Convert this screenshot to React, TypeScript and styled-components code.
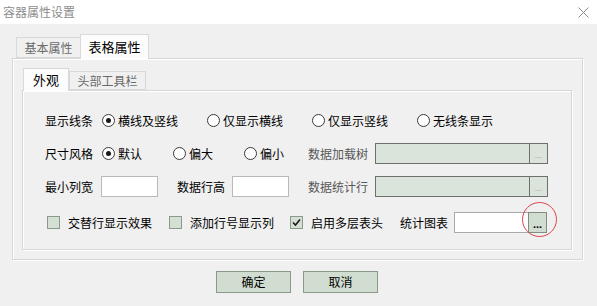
import React from "react";
import styled, { createGlobalStyle } from "styled-components";

const GlobalStyle = createGlobalStyle`
  html, body { margin: 0; padding: 0; background: #f0f0f0; }
  body {
    font-family: "Noto Sans CJK SC", "Liberation Sans", sans-serif;
    font-size: 12px;
    color: #000;
  }
  * { box-sizing: border-box; }
`;

const Window = styled.div`
  width: 597px;
  height: 306px;
  background: #f0f0f0;
  display: flex;
  flex-direction: column;
  overflow: hidden;
`;

const TitleBar = styled.div`
  height: 24px;
  background: #ffffff;
  display: flex;
  align-items: center;
  justify-content: space-between;
  padding: 0 8px 0 3px;
`;

const Title = styled.span`
  color: #8c8c8c;
  font-size: 12px;
  line-height: 14px;
`;

const Body = styled.div`
  padding: 10px 15px 0 12px;
  display: flex;
  flex-direction: column;
`;

const TabStrip = styled.div<{ $h: number; $pl: number }>`
  display: flex;
  align-items: flex-end;
  height: ${(p) => p.$h}px;
  padding-left: ${(p) => p.$pl}px;
  position: relative;
  z-index: 1;
`;

const Tab = styled.div<{ $w: number; $h: number; $active?: boolean; $noRight?: boolean }>`
  width: ${(p) => p.$w}px;
  height: ${(p) => p.$h + (p.$active ? 1 : 0)}px;
  margin-bottom: ${(p) => (p.$active ? -1 : 0)}px;
  border: 1px solid #d9d9d9;
  border-bottom: ${(p) => (p.$active ? "none" : "1px solid #d9d9d9")};
  border-right: ${(p) => (p.$noRight ? "none" : "1px solid #d9d9d9")};
  background: ${(p) => (p.$active ? "#fcfcfc" : "#f0f0f0")};
  color: ${(p) => (p.$active ? "#000" : "#6b6b6b")};
  font-size: ${(p) => (p.$active ? 13 : 12)}px;
  display: flex;
  align-items: center;
  justify-content: center;
  line-height: 14px;
  padding-top: ${(p) => (p.$active ? 0 : 1)}px;
`;

const Panel = styled.div<{ $w: number; $h: number; $p: string }>`
  width: ${(p) => p.$w}px;
  height: ${(p) => p.$h}px;
  border: 1px solid #d6d6d6;
  box-shadow: inset 1px 1px 0 #ffffff, 1px 1px 0 #ffffff;
  background: #f0f0f0;
  padding: ${(p) => p.$p};
  display: flex;
  flex-direction: column;
`;

const Row = styled.div<{ $mt: number }>`
  display: flex;
  align-items: center;
  height: 21px;
  margin-top: ${(p) => p.$mt}px;
`;

const Cell = styled.div<{ $w: number; $muted?: boolean }>`
  width: ${(p) => p.$w}px;
  flex: none;
  display: flex;
  align-items: center;
  white-space: nowrap;
  line-height: 14px;
  color: ${(p) => (p.$muted ? "#575757" : "#000")};
`;

const RadioCircle = styled.span<{ $on?: boolean }>`
  width: 13px;
  height: 13px;
  border-radius: 50%;
  border: 1px solid #3a3a3a;
  background: #ffffff;
  display: inline-flex;
  align-items: center;
  justify-content: center;
  margin-right: 3px;
  flex: none;
  &::after {
    content: "";
    display: ${(p) => (p.$on ? "block" : "none")};
    width: 5px;
    height: 5px;
    border-radius: 50%;
    background: #1a1a1a;
  }
`;

const CheckBox = styled.span`
  width: 13px;
  height: 13px;
  border: 1px solid #8a9a8a;
  background: #d5e0d5;
  display: inline-flex;
  align-items: center;
  justify-content: center;
  margin-right: 8px;
  flex: none;
`;

const TextInput = styled.div<{ $w: number }>`
  width: ${(p) => p.$w}px;
  height: 21px;
  background: #ffffff;
  border: 1px solid #b9b9b9;
  flex: none;
`;

const Combo = styled.div`
  display: flex;
  height: 21px;
  flex: none;
  position: relative;
`;

const ComboField = styled.div<{ $w: number; $disabled?: boolean }>`
  width: ${(p) => p.$w}px;
  height: 21px;
  background: ${(p) => (p.$disabled ? "#dae4da" : "#ffffff")};
  border: 1px solid ${(p) => (p.$disabled ? "#6f6f6f" : "#a9a9a9")};
  border-right: none;
`;

const DotsButton = styled.div<{ $dark?: boolean }>`
  width: 19px;
  height: 21px;
  background: ${(p) => (p.$dark ? "#d0ddd0" : "#dae4da")};
  border: 1px solid ${(p) => (p.$dark ? "#7f8f7f" : "#6f6f6f")};
  color: ${(p) => (p.$dark ? "#000" : "#a0a0a0")};
  font-size: ${(p) => (p.$dark ? 11 : 9)}px;
  font-weight: ${(p) => (p.$dark ? 700 : 400)};
  font-family: "Liberation Sans", sans-serif;
  display: flex;
  align-items: flex-end;
  justify-content: center;
  line-height: 12px;
  padding-bottom: 2px;
  position: relative;
`;

const RedCircle = styled.span`
  position: absolute;
  left: -7px;
  top: -11px;
  width: 35px;
  height: 35px;
  border: 1px solid #d9474a;
  border-radius: 50%;
  pointer-events: none;
`;

const Footer = styled.div`
  display: flex;
  justify-content: center;
  gap: 12px;
  margin-top: 11px;
`;

const Button = styled.div`
  width: 75px;
  height: 22px;
  background: #d0ddd0;
  border: 1px solid #8a9a8a;
  display: flex;
  align-items: center;
  justify-content: center;
  line-height: 14px;
`;

const Radio = ({ on, label, w }: { on?: boolean; label: string; w: number }) => (
  <Cell $w={w}>
    <RadioCircle $on={on} />
    {label}
  </Cell>
);

const Check = ({ on, label, w }: { on?: boolean; label: string; w: number }) => (
  <Cell $w={w}>
    <CheckBox>
      {on && (
        <svg width="9" height="9" viewBox="0 0 9 9">
          <path d="M1 4.5 L3.5 7 L8 1.5" stroke="#1a1a1a" strokeWidth="1.6" fill="none" />
        </svg>
      )}
    </CheckBox>
    {label}
  </Cell>
);

export default function App() {
  return (
    <>
      <GlobalStyle />
      <Window>
        <TitleBar>
          <Title>容器属性设置</Title>
          <svg width="11" height="11" viewBox="0 0 11 11">
            <path d="M0.5 0.5 L10.5 10.5 M10.5 0.5 L0.5 10.5" stroke="#8a8a8a" strokeWidth="1" />
          </svg>
        </TitleBar>
        <Body>
          <TabStrip $h={24} $pl={4}>
            <Tab $w={64} $h={21} $noRight>基本属性</Tab>
            <Tab $w={69} $h={24} $active>表格属性</Tab>
          </TabStrip>
          <Panel $w={571} $h={202} $p="9px 10px 9px 9px">
            <TabStrip $h={22} $pl={1}>
              <Tab $w={46} $h={22} $active>外观</Tab>
              <Tab $w={77} $h={19}>头部工具栏</Tab>
            </TabStrip>
            <Panel $w={550} $h={160} $p="0 0 0 22px">
              <Row $mt={19}>
                <Cell $w={57}>显示线条</Cell>
                <Radio on label="横线及竖线" w={105} />
                <Radio label="仅显示横线" w={105} />
                <Radio label="仅显示竖线" w={105} />
                <Radio label="无线条显示" w={100} />
              </Row>
              <Row $mt={12}>
                <Cell $w={57}>尺寸风格</Cell>
                <Radio on label="默认" w={71} />
                <Radio label="偏大" w={71} />
                <Radio label="偏小" w={64} />
                <Cell $w={67} $muted>数据加载树</Cell>
                <Combo>
                  <ComboField $w={154} $disabled />
                  <DotsButton>...</DotsButton>
                </Combo>
              </Row>
              <Row $mt={12}>
                <Cell $w={56}>最小列宽</Cell>
                <TextInput $w={57} />
                <Cell $w={19} />
                <Cell $w={55}>数据行高</Cell>
                <TextInput $w={57} />
                <Cell $w={19} />
                <Cell $w={67} $muted>数据统计行</Cell>
                <Combo>
                  <ComboField $w={154} $disabled />
                  <DotsButton>...</DotsButton>
                </Combo>
              </Row>
              <Row $mt={15}>
                <Cell $w={2} />
                <Check label="交替行显示效果" w={122} />
                <Check label="添加行号显示列" w={121} />
                <Check on label="启用多层表头" w={110} />
                <Cell $w={54}>统计图表</Cell>
                <Combo>
                  <ComboField $w={74} />
                  <DotsButton $dark>
                    ...
                    <RedCircle />
                  </DotsButton>
                </Combo>
              </Row>
            </Panel>
          </Panel>
          <Footer>
            <Button>确定</Button>
            <Button>取消</Button>
          </Footer>
        </Body>
      </Window>
    </>
  );
}
